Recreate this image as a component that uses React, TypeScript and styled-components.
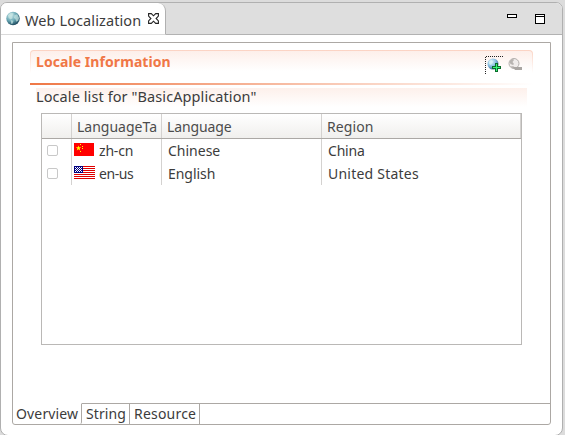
import React from "react";
import styled, { createGlobalStyle } from "styled-components";

const Global = createGlobalStyle`
  * { box-sizing: border-box; }
  html, body { margin: 0; padding: 0; background: #d9d9d9; overflow: hidden; }
`;

const Page = styled.div`
  width: 565px;
  height: 435px;
  padding-top: 2px;
  background: #dcdcdc;
  font-family: "Noto Sans", "Open Sans", sans-serif;
  font-size: 14px;
  color: #3c3c3c;
`;

const Frame = styled.div`
  display: flex;
  flex-direction: column;
  width: 563px;
  height: 434px;
  border: 1px solid #b0b0b0;
  border-radius: 7px 7px 8px 8px;
  background: #fff;
  overflow: hidden;
`;

const TitleBar = styled.div`
  display: flex;
  justify-content: space-between;
  flex: 0 0 32px;
  height: 32px;
  background: #dedede;
  border-bottom: 1px solid #b2b2b2;
`;

const EditorTab = styled.div`
  display: flex;
  align-items: center;
  width: 165px;
  height: 32px;
  padding-left: 5px;
  background: #fff;
  border-right: 1px solid #b0b0b0;
  border-bottom: 1px solid #dadada;
  border-radius: 0 8px 0 0;
`;

const Text = styled.span<{ $ls?: number; $bold?: boolean; $size?: number }>`
  display: block;
  font-size: ${(p) => p.$size ?? 14}px;
  line-height: 20px;
  white-space: pre;
  letter-spacing: ${(p) => p.$ls ?? 0}px;
  font-weight: ${(p) => (p.$bold ? 700 : 400)};
`;

const TabTitle = styled.div`
  width: 128px;
  padding: 2px 0 0 5px;
`;

const WindowButtons = styled.div`
  display: flex;
  gap: 18px;
  padding: 11px 17px 0 0;
`;

const Body = styled.div`
  display: flex;
  flex-direction: column;
  width: 539px;
  height: 383px;
  margin: 7px 0 0 11px;
  border: 1px solid #aca8a4;
  border-radius: 0 0 3px 3px;
`;

const Form = styled.div`
  flex: 1;
  padding: 7px 17px 0;
`;

const SectionHeader = styled.div`
  display: flex;
  justify-content: space-between;
  width: 503px;
  height: 32px;
  padding: 1px 10px 0 5px;
  border: 1px solid transparent;
  border-bottom: 0;
  border-radius: 4px 4px 0 0;
  background:
    linear-gradient(#fdefea, #fff 20px) padding-box,
    linear-gradient(#fbd3c3, #fff 23px) border-box;
  color: #f07746;
`;

const Tools = styled.div`
  display: flex;
  gap: 5px;
  padding-top: 4px;
`;

const Divider = styled.div`
  width: 503px;
  height: 2px;
  margin-top: 1px;
  background: linear-gradient(90deg, #ef7846, #fff);
`;

const Description = styled.div`
  width: 491px;
  height: 25px;
  margin: 3px 0 0 6px;
  background: linear-gradient(#fdf0eb, #fff 19px);
`;

const DescriptionText = styled(Text)`
  line-height: 17px;
`;

const Table = styled.div`
  width: 481px;
  height: 232px;
  margin-left: 11px;
  border: 1px solid #bab8b6;
`;

const Row = styled.div<{ $header?: boolean }>`
  display: grid;
  grid-template-columns: 30px 90px 160px 199px;
  height: ${(p) => (p.$header ? 25 : 23)}px;
  background: ${(p) => (p.$header ? "linear-gradient(#fff, #f0efed)" : "#fff")};
  border-bottom: ${(p) => (p.$header ? "1px solid #aba8a5" : "0")};
  color: ${(p) => (p.$header ? "#4c4c4c" : "#3c3c3c")};
`;

const Cell = styled.div<{ $pad?: number; $clip?: number; $drop?: number }>`
  display: flex;
  align-items: center;
  overflow: hidden;
  padding-top: ${(p) => p.$drop ?? 0}px;
  padding-left: ${(p) => p.$pad ?? 0}px;
  padding-right: ${(p) => p.$clip ?? 0}px;
  border-right: 1px solid #d4d2d0;
`;

const LastCell = styled(Cell)<{ $header?: boolean }>`
  border-right-color: ${(p) => (p.$header ? "#d4d2d0" : "transparent")};
`;

const Clip = styled.div`
  overflow: hidden;
`;

const Checkbox = styled.span`
  width: 11px;
  height: 11px;
  border: 1px solid #c8c8c8;
  border-radius: 2px;
  background: #fff;
`;

const FlagSlot = styled.div`
  display: flex;
  width: 25px;
  height: 16px;
`;

const PageTabs = styled.div`
  display: flex;
  height: 21px;
`;

const PageTab = styled.div<{ $w: number; $active?: boolean }>`
  width: ${(p) => p.$w}px;
  padding-left: ${(p) => (p.$active ? 3 : 4)}px;
  border-top: 1px solid ${(p) => (p.$active ? "transparent" : "#aca8a4")};
  border-right: 1px solid #aca8a4;
  border-bottom-right-radius: ${(p) => (p.$active ? 2 : 0)}px;
`;

const TabsRest = styled.div`
  flex: 1;
  border-top: 1px solid #aca8a4;
`;

const Globe = () => (
  <svg width="14" height="15" viewBox="0 0 15 15">
    <defs>
      <radialGradient id="globe" cx="35%" cy="28%" r="75%">
        <stop offset="0" stopColor="#d0ecee" />
        <stop offset=".55" stopColor="#66a5b2" />
        <stop offset="1" stopColor="#1d485c" />
      </radialGradient>
    </defs>
    <circle cx="7.5" cy="7.5" r="7.2" fill="url(#globe)" />
    <path d="M2 4l3-2.500 3 .5-.5 2L6 5l1 2-2 1.500L3 7zM9 4l3-1 2 4-1 3-2 1-1-3-1.500-1zM5 9l3 1-1 3-1.500 0z" fill="#c8e6e3" opacity=".7" />
  </svg>
);

const Close = () => (
  <svg width="11" height="11" viewBox="0 0 11 11" fill="#fff" stroke="#222" strokeWidth="1.100">
    <path d="M.6.6h2.700L5.500 2.800 7.700.6h2.700v2.500L8.100 5.500l2.300 2.400v2.500H7.700L5.500 8.200 3.300 10.400H.6V7.900L2.900 5.500.6 3.100z" />
  </svg>
);

const Minimize = () => (
  <svg width="10" height="11" shapeRendering="crispEdges">
    <rect x=".5" y=".5" width="9" height="3" fill="#fff" stroke="#000" />
  </svg>
);

const Maximize = () => (
  <svg width="10" height="11" shapeRendering="crispEdges">
    <rect x=".5" y=".5" width="9" height="9" fill="#fff" stroke="#000" />
    <path d="M1 2.500h8" stroke="#000" />
  </svg>
);

const AddLocale = () => (
  <svg width="18" height="19" viewBox="0 0 18 19">
    <defs>
      <radialGradient id="add" cx="35%" cy="30%" r="75%">
        <stop offset="0" stopColor="#e0f4fc" />
        <stop offset=".55" stopColor="#86bce0" />
        <stop offset="1" stopColor="#315f92" />
      </radialGradient>
    </defs>
    <path d="M.5 18V.5H18" fill="none" stroke="#222" strokeDasharray="1 1" shapeRendering="crispEdges" />
    <circle cx="8" cy="8" r="5.500" fill="url(#add)" />
    <path d="M4 5l3-1 1 2-2 3-2-1z" fill="#d8f2f6" opacity=".7" />
    <path d="M10 7h3v3h3v3h-3v3h-3v-3H7v-3h3z" fill="#096b2a" shapeRendering="crispEdges" />
    <path d="M11 8h1v3h3v1h-3v3h-1v-3H8v-1h3z" fill="#35f278" shapeRendering="crispEdges" />
  </svg>
);

const RemoveLocale = () => (
  <svg width="14" height="19" viewBox="0 0 14 19">
    <circle cx="6" cy="7.5" r="5" fill="#f0eceb" stroke="#b3afac" />
    <path d="M1.500 6c1-3 4-4 4.500-2L4.500 6 6 8 5 9 2.500 8zM3 10l3 .5 1 2-3-.5z" fill="#b8b4b1" />
    <path d="M5 11h9v3H7z" fill="#aaa6a3" />
  </svg>
);

const China = () => (
  <svg width="20" height="13" viewBox="0 0 20 13">
    <path fill="#f00" d="M0 0h20v13H0z" />
    <path fill="#ff0" d="M4.500 2.500l.7 1.800h2L5.600 5.500l.6 2L4.500 6.300 2.800 7.500l.6-2L1.800 4.300h2zM6 1h1v1H6zM8 3h1v1H8zM8 5h1v1H8zM6 8h1v1H6z" />
  </svg>
);

const UnitedStates = () => (
  <svg width="21" height="13" viewBox="0 0 21 13" shapeRendering="crispEdges">
    <path fill="#fff" d="M0 0h21v13H0z" />
    <path stroke="#df0000" d="M0 .5h21M0 2.500h21M0 4.500h21M0 6.500h21M0 8.500h21M0 10.500h21M0 12.500h21" />
    <path fill="#000080" d="M0 0h9v7H0z" />
    <path stroke="#fff" strokeDasharray="1 1" d="M1 1.500h7M1 3.500h7M1 5.500h7M2 2.500h6M2 4.500h6" />
  </svg>
);

const locales = [
  { flag: <China />, tag: "zh-cn", tagLs: -0.2, language: "Chinese", langLs: 0, region: "China", regLs: -0.2 },
  { flag: <UnitedStates />, tag: "en-us", tagLs: -0.45, language: "English", langLs: -0.05, region: "United States", regLs: 0.22 },
];

export default function App() {
  return (
    <Page>
      <Global />
      <Frame>
        <TitleBar>
          <EditorTab>
            <Globe />
            <TabTitle><Text $size={14.5} $ls={0.1}>Web Localization</Text></TabTitle>
            <Close />
          </EditorTab>
          <WindowButtons>
            <Minimize />
            <Maximize />
          </WindowButtons>
        </TitleBar>
        <Body>
          <Form>
            <SectionHeader>
              <Text $bold $ls={0.07}>Locale Information</Text>
              <Tools>
                <AddLocale />
                <RemoveLocale />
              </Tools>
            </SectionHeader>
            <Divider />
            <Description>
              <DescriptionText $size={14.5} $ls={0.09}>Locale list for "BasicApplication"</DescriptionText>
            </Description>
            <Table>
              <Row $header>
                <Cell />
                <Cell $pad={5} $clip={4} $drop={2}><Clip><Text>LanguageTag</Text></Clip></Cell>
                <Cell $pad={5} $drop={2}><Text $ls={-0.1}>Language</Text></Cell>
                <LastCell $header $pad={5} $drop={2}><Text $ls={0.1}>Region</Text></LastCell>
              </Row>
              {locales.map((l) => (
                <Row key={l.tag}>
                  <Cell $pad={5}><Checkbox /></Cell>
                  <Cell $pad={2}>
                    <FlagSlot>{l.flag}</FlagSlot>
                    <Text $ls={l.tagLs}>{l.tag}</Text>
                  </Cell>
                  <Cell $pad={6}><Text $ls={l.langLs}>{l.language}</Text></Cell>
                  <LastCell $pad={6}><Text $ls={l.regLs}>{l.region}</Text></LastCell>
                </Row>
              ))}
            </Table>
          </Form>
          <PageTabs>
            <PageTab $w={69} $active><Text $ls={0.15}>Overview</Text></PageTab>
            <PageTab $w={48}><Text $ls={0.1}>String</Text></PageTab>
            <PageTab $w={70}><Text $ls={0.2}>Resource</Text></PageTab>
            <TabsRest />
          </PageTabs>
        </Body>
      </Frame>
    </Page>
  );
}
